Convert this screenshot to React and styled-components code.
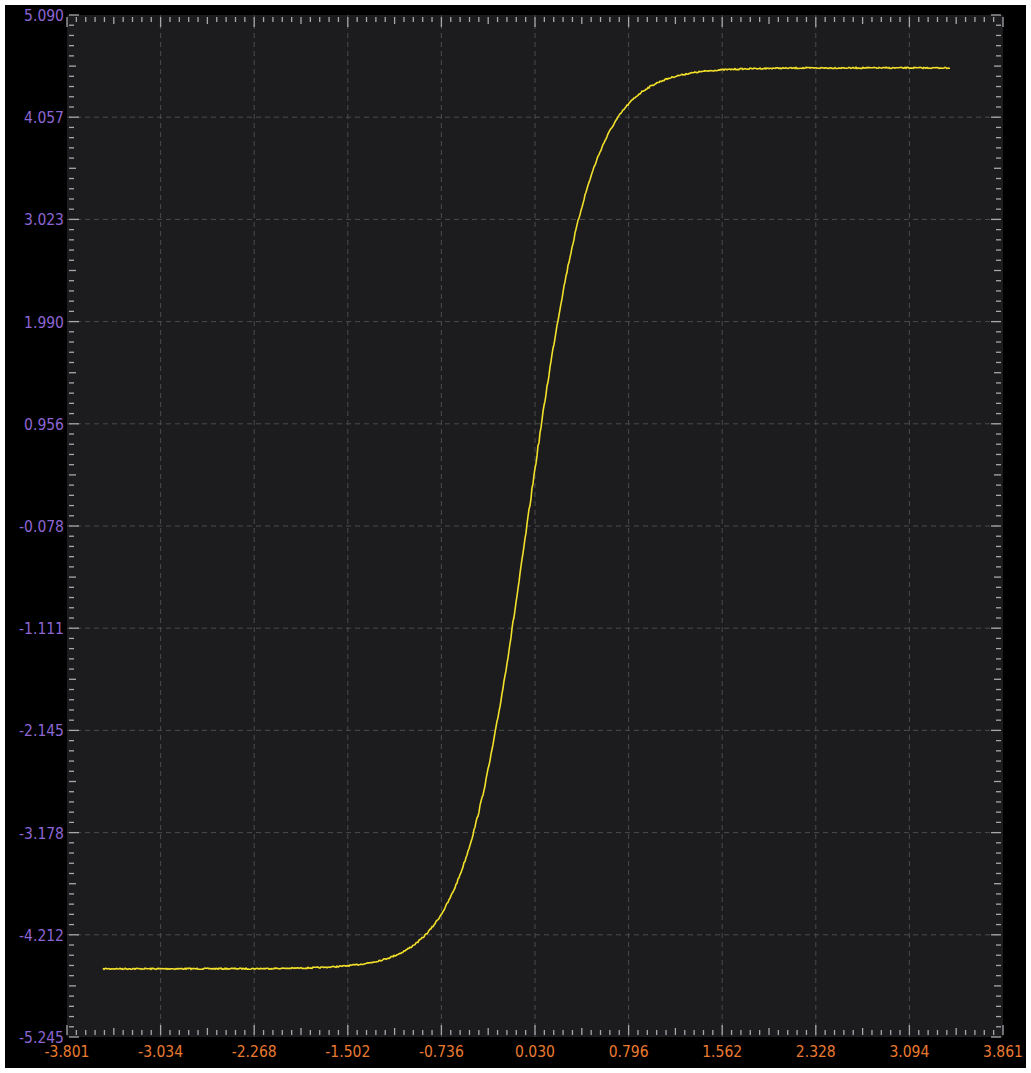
import React from "react";
import styled, { createGlobalStyle } from "styled-components";

const Global = createGlobalStyle`
  html, body { margin: 0; background: #fff; }
`;

const Frame = styled.div`
  margin: 5px;
  width: 1021px;
  height: 1063px;
  background: #000;
  display: flex;
`;

const Chart = styled.svg`
  display: block;
  flex: 1;
`;

const AxisText = styled.g`
  font-family: "DejaVu Sans Condensed", "DejaVu Sans", sans-serif;
  font-size: 15.5px;
  fill: ${(p) => p.$color};
`;

const X0 = 62, X1 = 998, Y0 = 10, Y1 = 1032;
const xs = ["-3.801","-3.034","-2.268","-1.502","-0.736","0.030","0.796","1.562","2.328","3.094","3.861"];
const ys = ["5.090","4.057","3.023","1.990","0.956","-0.078","-1.111","-2.145","-3.178","-4.212","-5.245"];

function curve() {
  const pts = [];
  let seed = 7;
  const rnd = () => { seed = (seed * 16807) % 2147483647; return seed / 2147483647 - 0.5; };
  for (let x = 98; x <= 945; x += 1) {
    const v = 4.555 * Math.tanh(0.0158 * (x - 523));
    const slope = 1 - Math.tanh(0.0158 * (x - 523)) ** 2;
    const y = Y0 + (5.09 - v) * (1022 / 10.335) + rnd() * (1.2 + slope * 3);
    pts.push(`${x},${y.toFixed(1)}`);
  }
  return pts.join(" ");
}

export default function App() {
  const dx = (X1 - X0) / 10, dy = (Y1 - Y0) / 10;
  const ticks = [];
  for (let i = 0; i <= 100; i++) {
    const x = X0 + (i * dx) / 10;
    const len = i % 10 === 0 ? 10 : i % 5 === 0 ? 7 : 5;
    ticks.push(<line key={"t" + i} x1={x} x2={x} y1={Y0 + 2} y2={Y0 + 2 + len} />);
    ticks.push(<line key={"b" + i} x1={x} x2={x} y1={Y1 - 2} y2={Y1 - 2 - len} />);
    const y = Y0 + (i * dy) / 10;
    ticks.push(<line key={"l" + i} y1={y} y2={y} x1={X0 + 2} x2={X0 + 2 + len} />);
    ticks.push(<line key={"r" + i} y1={y} y2={y} x1={X1 - 2} x2={X1 - 2 - len} />);
  }
  return (
    <>
      <Global />
      <Frame>
        <Chart width="1021" height="1063">
          <rect x={X0} y={Y0} width={X1 - X0} height={Y1 - Y0} fill="#1c1c1f" />
          <g stroke="#4a4a4e" strokeDasharray="5 4" strokeWidth="1">
            {xs.slice(1, -1).map((_, i) => (
              <line key={i} x1={X0 + (i + 1) * dx} x2={X0 + (i + 1) * dx} y1={Y0} y2={Y1} />
            ))}
            {ys.slice(1, -1).map((_, i) => (
              <line key={i} y1={Y0 + (i + 1) * dy} y2={Y0 + (i + 1) * dy} x1={X0} x2={X1} />
            ))}
          </g>
          <g stroke="#a8a8ac" strokeWidth="1.3">{ticks}</g>
          <polyline points={curve()} fill="none" stroke="#f2e02a" strokeWidth="1.6" />
          <AxisText $color="#8d66d4">
            {ys.map((t, i) => (
              <text key={t} x={X0 - 3} y={Y0 + i * dy + 6} textAnchor="end">{t}</text>
            ))}
          </AxisText>
          <AxisText $color="#ea7a30">
            {xs.map((t, i) => (
              <text key={t} x={X0 + i * dx} y={Y1 + 20} textAnchor="middle">{t}</text>
            ))}
          </AxisText>
        </Chart>
      </Frame>
    </>
  );
}
